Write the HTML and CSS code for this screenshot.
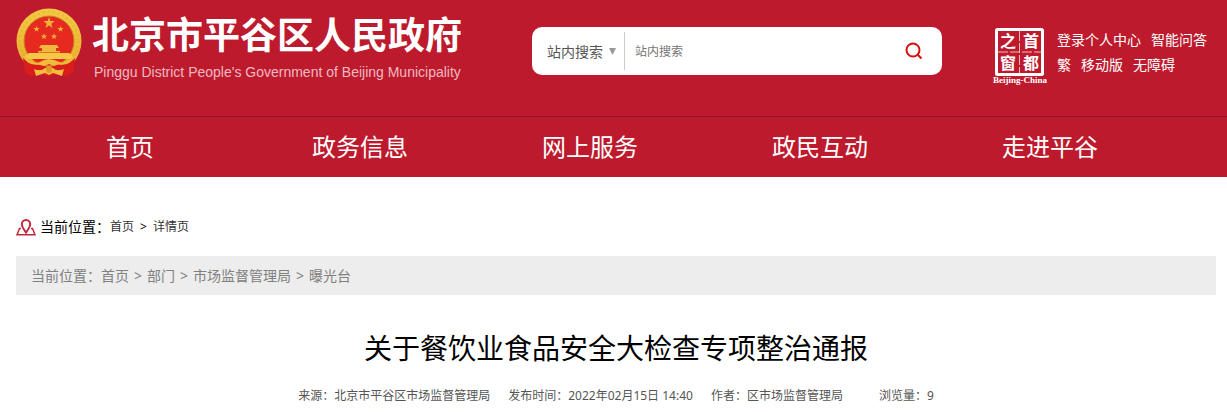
FILE: index.html
```html
<!DOCTYPE html>
<html lang="zh-CN">
<head>
<meta charset="utf-8">
<meta name="viewport" content="width=device-width, initial-scale=1">
<title>关于餐饮业食品安全大检查专项整治通报</title>
<link rel="stylesheet" href="styles.css">
</head>
<body>
<header class="site-header">
  <div class="masthead">
    <a class="brand" href="#">
      <svg class="emblem" viewBox="0 0 66 70" aria-hidden="true">
        <defs>
          <linearGradient id="gold" x1="0" y1="0" x2="0" y2="1">
            <stop offset="0" stop-color="#f3c944"/>
            <stop offset="1" stop-color="#e9ab2c"/>
          </linearGradient>
          <path id="star" d="M0-6 1.4-1.9 5.7-1.9 2.3.7 3.5 4.9 0 2.4-3.5 4.9-2.3.7-5.7-1.9-1.4-1.9z"/>
        </defs>
        <path d="M10 52 8 62 15 68 25 66 33 69 41 66 51 68 58 62 56 52z" fill="#d5191b"/>
        <circle cx="33" cy="33" r="32.500" fill="url(#gold)"/>
        <circle cx="33" cy="33" r="29" fill="none" stroke="#dc9a27" stroke-width="2" stroke-dasharray="2 3" opacity=".3"/>
        <circle cx="33" cy="33" r="25" fill="#e62a20" stroke="#c98523"/>
        <g fill="#edb238">
          <use href="#star" x="33" y="15"/>
          <use href="#star" transform="translate(20.500 21) scale(.55)"/>
          <use href="#star" transform="translate(44.500 21) scale(.55)"/>
          <use href="#star" transform="translate(28 28.500) scale(.55)"/>
          <use href="#star" transform="translate(38 28.500) scale(.55)"/>
        </g>
        <path d="M25 37h16l2 3h-3v3h4v2H22v-2h4v-3h-3z" fill="#f0b83c"/>
        <path d="M13 45h40l4 3-2 3H11l-2-3z" fill="#f6c845"/>
        <path d="M22 44.500h22" stroke="#d97622" fill="none"/>
        <path d="M7 50Q15 58 25 56L33 60 41 56Q51 58 59 50L57 64 50 69 44 62 33 68 22 62 16 69 9 64z" fill="#d91d1b"/>
        <path d="M20 56 28 52 33 51 38 52 46 55 38 58 33 56 28 58z" fill="#f1bb3b"/>
        <path d="M18 61Q25 64 29 60L33 59 37 60Q41 64 48 61L46 68 37 65 33 67 29 65 20 68z" fill="#f3bd3f"/>
        <path d="M8 48Q13 58 26 55M58 48Q53 58 40 55" stroke="#f0b93b" stroke-width="2" fill="none"/>
        <circle cx="33" cy="62" r="3" fill="#e39b2b"/>
      </svg>
      <span class="brand-text">
        <span class="brand-name">北京市平谷区人民政府</span>
        <span class="brand-en">Pinggu District People's Government of Beijing Municipality</span>
      </span>
    </a>
    <form class="search" role="search">
      <label class="scope">
        <select class="scope-select" aria-label="搜索范围"><option>站内搜索</option></select>
        <svg class="scope-arrow" viewBox="0 0 7 7" aria-hidden="true"><path d="M0 0h7L3.500 7z" fill="#999"/></svg>
      </label>
      <input class="search-input" type="text" placeholder="站内搜索" aria-label="站内搜索">
      <button class="search-button" type="submit" aria-label="搜索">
        <svg class="search-icon" viewBox="0 0 18 18" aria-hidden="true"><circle cx="8" cy="8" r="6.500"/><path d="m12.700 12.700 3.800 3.800"/></svg>
      </button>
    </form>
    <div class="tools">
      <a class="seal" href="#" aria-label="首都之窗">
        <svg class="seal-art" viewBox="0 0 56 58">
          <rect x="4.500" y="2.500" width="46" height="45" rx="1" fill="none" stroke="#fff" stroke-width="3"/>
          <path d="M27.500 4v42M6 25h43" stroke="#f0b9c0" stroke-dasharray="10 2"/>
          <g class="seal-glyphs">
            <text x="16" y="20">之</text><text x="39" y="20">首</text>
            <text x="16" y="42">窗</text><text x="39" y="42">都</text>
          </g>
          <text class="seal-caption" x="28" y="56">Beijing-China</text>
        </svg>
      </a>
      <div class="tool-links">
        <div class="tool-row"><a href="#">登录个人中心</a><a href="#">智能问答</a></div>
        <div class="tool-row"><a href="#">繁</a><a href="#">移动版</a><a href="#">无障碍</a></div>
      </div>
    </div>
  </div>
  <nav class="main-nav">
    <a href="#">首页</a><a href="#">政务信息</a><a href="#">网上服务</a><a href="#">政民互动</a><a href="#">走进平谷</a>
  </nav>
</header>
<main class="content">
  <nav class="location" aria-label="当前位置">
    <svg class="pin" viewBox="0 0 20 17" aria-hidden="true">
      <path d="M5 9.500H3.500L1 15.800h18L16.500 9.500H15" fill="none" stroke="#c0283c" stroke-width="1.500"/>
      <path d="M10 13.500C8.500 11 5.800 8.500 5.800 5.200a4.200 4.200 0 0 1 8.400 0C14.200 8.500 11.500 11 10 13.500z" fill="#fff" stroke="#c0283c" stroke-width="2"/>
    </svg>
    <span class="location-label">当前位置：</span>
    <span class="location-path"><a href="#">首页</a><span class="location-sep">&gt;</span><a href="#">详情页</a></span>
  </nav>
  <nav class="crumbs" aria-label="栏目">
    <span>当前位置：</span><a href="#">首页</a><span class="crumb-sep">&gt;</span><a href="#">部门</a><span class="crumb-sep">&gt;</span><a href="#">市场监督管理局</a><span class="crumb-sep">&gt;</span><a href="#">曝光台</a>
  </nav>
  <article>
    <h1 class="title">关于餐饮业食品安全大检查专项整治通报</h1>
    <div class="meta">
      <span>来源：北京市平谷区市场监督管理局</span>
      <span>发布时间：2022年02月15日 14:40</span>
      <span>作者：区市场监督管理局</span>
      <span class="views">浏览量：9</span>
    </div>
  </article>
</main>
</body>
</html>
```
FILE: styles.css
```css
* { box-sizing: border-box; }
body {
  margin: 0;
  background: #fff;
  color: #000;
  font-family: "Noto Sans", "Noto Sans CJK SC", sans-serif;
  font-size: 14px;
}
a { color: inherit; text-decoration: none; }
svg { display: block; flex: none; }

.site-header { background: #bd1a2d; color: #fff; }
.masthead {
  display: flex;
  align-items: flex-start;
  gap: 50px;
  padding: 8px 20px 0 16px;
  min-height: 116px;
}
.brand { display: flex; gap: 10px; flex: none; margin-right: auto; }
.emblem { width: 66px; height: 70px; }
.brand-text { display: flex; flex-direction: column; }
.brand-name { font-size: 37px; font-weight: 700; line-height: 54px; }
.brand-en {
  padding-left: 2px;
  color: #f0b9c0;
  font-family: "Liberation Sans", Arial, sans-serif;
  font-size: 14px;
  line-height: 20px;
}

.search {
  display: flex;
  align-items: center;
  width: 410px;
  height: 48px;
  margin-top: 19px;
  padding: 0 19px 0 15px;
  border-radius: 10px;
  background: #fff;
}
.scope {
  display: flex;
  align-items: center;
  gap: 6px;
  height: 38px;
  padding-right: 8px;
  border-right: 1px solid #ccc;
}
.scope-select, .search-input, .search-button {
  margin: 0;
  padding: 0;
  border: 0;
  background: none;
  font-family: inherit;
}
.scope-select { appearance: none; width: 56px; color: #555; font-size: 14px; }
.scope-arrow { width: 7px; height: 7px; }
.search-input { flex: 1; min-width: 0; padding-left: 10px; font-size: 12px; }
.search-input::placeholder { color: #757575; opacity: 1; }
.search-icon { width: 18px; height: 18px; fill: none; stroke: #dc0d0d; stroke-width: 2; }

.tools { display: flex; gap: 9px; flex: none; padding-top: 19px; }
.seal-art { width: 56px; height: 58px; }
.seal-glyphs { fill: #fff; font-family: "Noto Sans CJK SC", sans-serif; font-size: 16px; font-weight: 700; text-anchor: middle; }
.seal-caption { fill: #fff; font-family: "Liberation Serif", serif; font-size: 9px; font-weight: 700; text-anchor: middle; }
.tool-row { display: flex; gap: 10px; line-height: 25px; }

.main-nav {
  display: grid;
  grid-template-columns: repeat(5, 1fr);
  padding: 0 62px 0 15px;
  border-top: 1px solid #8f1524;
  font-size: 24px;
  line-height: 60px;
  text-align: center;
}

.content { padding: 38px 11px 0 16px; }
.location { display: flex; align-items: center; line-height: 24px; }
.pin { width: 20px; height: 17px; margin-right: 4px; }
.location-path { font-size: 12px; }
.location-path a { color: #333; }
.location-sep { padding: 0 6px; }
.crumbs {
  margin-top: 17px;
  padding: 0 15px;
  background: #ededed;
  color: #808080;
  line-height: 39px;
}
.crumb-sep { padding: 0 5px; }
.title { margin: 32px 0 0; font-size: 28px; font-weight: 400; line-height: 42px; text-align: center; }
.meta {
  display: flex;
  justify-content: center;
  gap: 18px;
  margin-top: 17px;
  color: #555;
  font-size: 12px;
  line-height: 20px;
}
.views { padding-left: 18px; }
```
